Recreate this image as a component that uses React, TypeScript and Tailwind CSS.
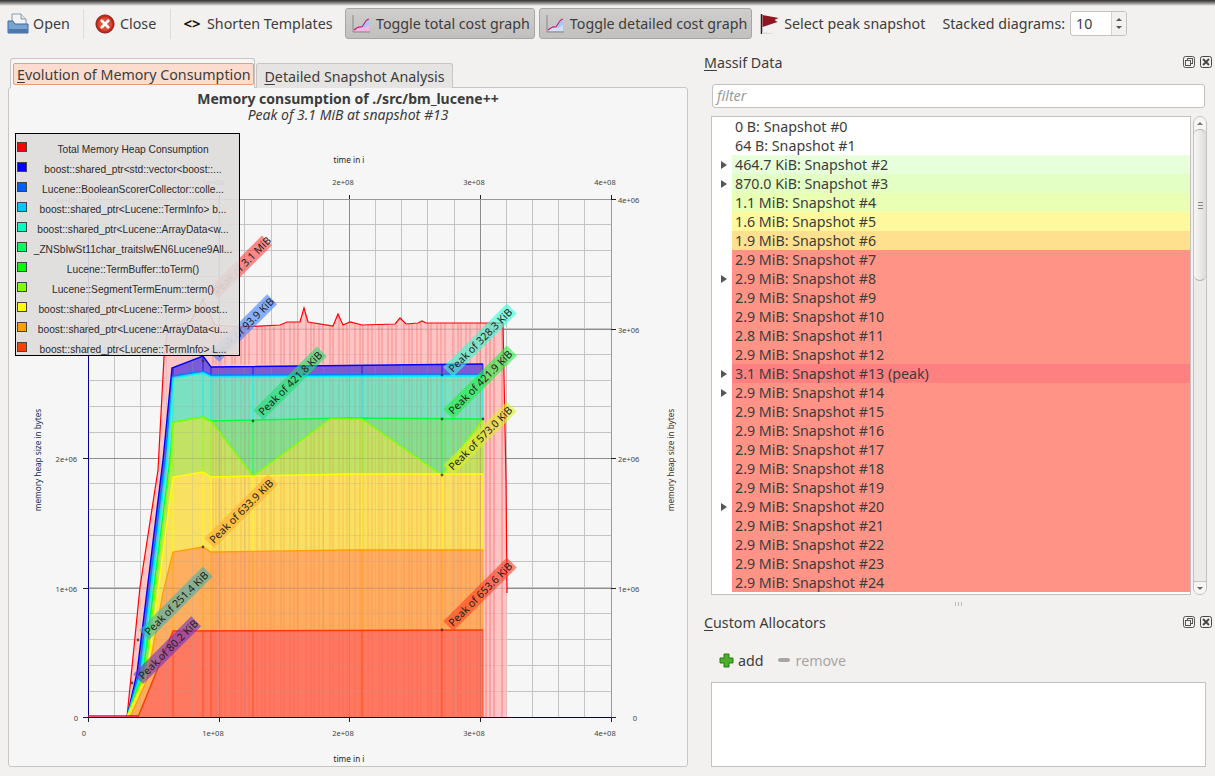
import type { ReactNode } from "react";

type Pt = [number, number];

const rows: { label: string; bg: string; arrow?: boolean }[] = [
  { label: "0 B: Snapshot #0", bg: "bg-white" },
  { label: "64 B: Snapshot #1", bg: "bg-white" },
  { label: "464.7 KiB: Snapshot #2", bg: "bg-[#e8ffdc]", arrow: true },
  { label: "870.0 KiB: Snapshot #3", bg: "bg-[#e4ffc4]", arrow: true },
  { label: "1.1 MiB: Snapshot #4", bg: "bg-[#e8ffb4]" },
  { label: "1.6 MiB: Snapshot #5", bg: "bg-[#fff89c]" },
  { label: "1.9 MiB: Snapshot #6", bg: "bg-[#ffe08e]" },
  { label: "2.9 MiB: Snapshot #7", bg: "bg-[#ff9486]" },
  { label: "2.9 MiB: Snapshot #8", bg: "bg-[#ff9486]", arrow: true },
  { label: "2.9 MiB: Snapshot #9", bg: "bg-[#ff9486]" },
  { label: "2.9 MiB: Snapshot #10", bg: "bg-[#ff9486]" },
  { label: "2.8 MiB: Snapshot #11", bg: "bg-[#ff9486]" },
  { label: "2.9 MiB: Snapshot #12", bg: "bg-[#ff9486]" },
  { label: "3.1 MiB: Snapshot #13 (peak)", bg: "bg-[#ff8080]", arrow: true },
  { label: "2.9 MiB: Snapshot #14", bg: "bg-[#ff9486]", arrow: true },
  { label: "2.9 MiB: Snapshot #15", bg: "bg-[#ff9486]" },
  { label: "2.9 MiB: Snapshot #16", bg: "bg-[#ff9486]" },
  { label: "2.9 MiB: Snapshot #17", bg: "bg-[#ff9486]" },
  { label: "2.9 MiB: Snapshot #18", bg: "bg-[#ff9486]" },
  { label: "2.9 MiB: Snapshot #19", bg: "bg-[#ff9486]" },
  { label: "2.9 MiB: Snapshot #20", bg: "bg-[#ff9486]", arrow: true },
  { label: "2.9 MiB: Snapshot #21", bg: "bg-[#ff9486]" },
  { label: "2.9 MiB: Snapshot #22", bg: "bg-[#ff9486]" },
  { label: "2.9 MiB: Snapshot #23", bg: "bg-[#ff9486]" },
  { label: "2.9 MiB: Snapshot #24", bg: "bg-[#ff9486]" },
];

const legend = [
  { label: "Total Memory Heap Consumption", color: "bg-[#ff0000]" },
  { label: "boost::shared_ptr<std::vector<boost::...", color: "bg-[#0000ff]" },
  { label: "Lucene::BooleanScorerCollector::colle...", color: "bg-[#0060ff]" },
  { label: "boost::shared_ptr<Lucene::TermInfo> b...", color: "bg-[#00c8ff]" },
  { label: "boost::shared_ptr<Lucene::ArrayData<w...", color: "bg-[#00ffc0]" },
  { label: "_ZNSbIwSt11char_traitsIwEN6Lucene9All...", color: "bg-[#00ff60]" },
  { label: "Lucene::TermBuffer::toTerm()", color: "bg-[#00ff00]" },
  { label: "Lucene::SegmentTermEnum::term()", color: "bg-[#80ff00]" },
  { label: "boost::shared_ptr<Lucene::Term> boost...", color: "bg-[#ffff00]" },
  { label: "boost::shared_ptr<Lucene::ArrayData<u...", color: "bg-[#ffa000]" },
  { label: "boost::shared_ptr<Lucene::TermInfo> L...", color: "bg-[#ff4000]" },
];

// chart geometry is written in page pixels, the svg viewBox lines up with them
const X0 = 88, X4 = 611, Y0 = 717, Y4 = 199;
const xMajor = [88, 219, 349, 480, 611];
const yMajor = [717, 588, 458, 329, 199];
const xMinor = Array.from({ length: 21 }, (_, i) => 88 + i * 26.15);
const yMinor = Array.from({ length: 21 }, (_, i) => 717 - i * 25.9);

const totalTop: Pt[] = [
  [127, 717], [140, 587], [158, 470], [164, 357], [168, 328], [190, 322], [203, 300], [215, 325], [240, 327],
  [280, 325], [287, 322], [300, 322], [304, 308], [308, 322], [333, 326], [338, 314], [343, 325], [350, 322],
  [362, 325], [395, 324], [400, 318], [406, 324], [418, 323], [422, 321], [426, 323], [503, 323], [506, 480],
  [507, 593],
];

const layers: { fill: string; line: string; top: Pt[] }[] = [
  { fill: "#7a5cd8", line: "#0000ff", top: [[127, 717], [137, 673], [163, 460], [172, 368], [203, 356], [211, 367], [483, 364]] },
  { fill: "#6f9fe0", line: "#0080ff", top: [[127, 717], [139, 673], [165, 460], [173, 376], [203, 371], [211, 375], [483, 374]] },
  { fill: "#7ae0c0", line: "#00f0ff", top: [[127, 717], [141, 673], [167, 460], [173, 378], [203, 373], [211, 377], [483, 376]] },
  { fill: "#82e08e", line: "#00ff40", top: [[127, 717], [143, 673], [170, 460], [173, 422], [203, 417], [211, 421], [350, 418], [483, 419]] },
  { fill: "#c2e264", line: "#80ff00", top: [[127, 717], [145, 673], [171, 460], [173, 422], [203, 417], [211, 421], [253, 476], [330, 419], [362, 419], [442, 475], [483, 419]] },
  { fill: "#fae060", line: "#ffff00", top: [[127, 717], [147, 673], [173, 477], [203, 472], [211, 477], [350, 474], [483, 474]] },
  { fill: "#ffae60", line: "#ffa000", top: [[130, 717], [147, 680], [163, 593], [173, 552], [203, 547], [211, 552], [350, 550], [483, 550]] },
  { fill: "#ff7860", line: "#ff3c00", top: [[138, 717], [173, 631], [483, 630]] },
];

const snapshotXs = [173, 203, 211, 253, 362, 442, 483];

const stripeSteps = [3, 5, 4, 7, 3, 6, 4, 4, 8, 5];
const stripes: number[] = [];
for (let x = 213, i = 0; x < 507; x += stripeSteps[i % 10], i++) stripes.push(x);

const peaks: { text: string; x: number; y: number; bg: string; w: number }[] = [
  { text: "Peak of 3.1 MiB", x: 216, y: 297, bg: "#ff4040", w: 76 },
  { text: "Peak of 93.9 KiB", x: 217, y: 360, bg: "#4080ff", w: 82 },
  { text: "Peak of 421.8 KiB", x: 261, y: 418, bg: "#20e070", w: 90 },
  { text: "Peak of 328.3 KiB", x: 451, y: 375, bg: "#30ffd8", w: 90 },
  { text: "Peak of 421.9 KiB", x: 451, y: 417, bg: "#20f040", w: 90 },
  { text: "Peak of 573.0 KiB", x: 451, y: 473, bg: "#e0f020", w: 90 },
  { text: "Peak of 633.9 KiB", x: 212, y: 546, bg: "#ffb030", w: 90 },
  { text: "Peak of 251.4 KiB", x: 147, y: 638, bg: "#40b0b0", w: 90 },
  { text: "Peak of 80.2 KiB", x: 141, y: 682, bg: "#7030c0", w: 82 },
  { text: "Peak of 653.6 KiB", x: 451, y: 629, bg: "#ff4020", w: 90 },
];

const dots: Pt[] = [[132, 683], [138, 640], [203, 547], [203, 361], [203, 300], [253, 421], [442, 375], [442, 419], [483, 419], [442, 475], [442, 630]];

function yAt(pts: Pt[], x: number) {
  for (let i = 1; i < pts.length; i++) {
    if (x <= pts[i][0]) {
      const [x1, y1] = pts[i - 1];
      const [x2, y2] = pts[i];
      return y1 + ((y2 - y1) * (x - x1)) / (x2 - x1);
    }
  }
  return pts[pts.length - 1][1];
}

const str = (pts: Pt[]) => pts.map((p) => p.join(",")).join(" ");

function Grid({ minor, major }: { minor: string; major: string }) {
  return (
    <g strokeWidth="1" shapeRendering="crispEdges">
      {xMinor.map((x) => <line key={x} x1={x} x2={x} y1={Y4} y2={Y0} stroke={minor} />)}
      {yMinor.map((y) => <line key={y} y1={y} y2={y} x1={X0} x2={X4} stroke={minor} />)}
      {xMajor.map((x) => <line key={x} x1={x} x2={x} y1={Y4} y2={Y0} stroke={major} />)}
      {yMajor.map((y) => <line key={y} y1={y} y2={y} x1={X0} x2={X4} stroke={major} />)}
    </g>
  );
}

function MemoryChart() {
  const tick = "font-['Noto_Sans',sans-serif] text-[7.5px] fill-[#444]";
  const axis = "font-['Noto_Sans',sans-serif] text-[8.2px]";
  return (
    <svg width="678" height="645" viewBox="9 122 678 645" className="block">
      <defs>
        <clipPath id="total">
          <polygon points={str([...totalTop, [507, 717]])} />
        </clipPath>
      </defs>

      <Grid minor="#cfcfcf" major="#9a9a9a" />

      {/* stacked areas, top one first */}
      <polygon points={str([...totalTop, [507, 717]])} fill="#ffc4c4" />
      {layers.map((l) => (
        <polygon key={l.line} points={str([...l.top, [l.top[l.top.length - 1][0], 717]])} fill={l.fill} />
      ))}
      <g opacity="0.22"><Grid minor="#a0a0a0" major="#606060" /></g>
      <g clipPath="url(#total)" shapeRendering="crispEdges" stroke="#ff3030" strokeWidth="1.5">
        {stripes.map((x) => (
          <g key={x}>
            <line x1={x} x2={x} y1={300} y2={x > 483 ? 717 : 364} strokeOpacity={x > 483 ? 0.25 : 0.2} />
            {x <= 483 && <line x1={x} x2={x} y1={364} y2={717} strokeOpacity="0.09" />}
          </g>
        ))}
      </g>

      {/* snapshot markers inside each layer */}
      {layers.map((l, i) => {
        const below = layers[i + 1]?.top;
        return snapshotXs.map((x) => (
          <line key={l.line + x} x1={x} x2={x} y1={yAt(l.top, x)} y2={below ? yAt(below, x) : 717} stroke={l.line} strokeOpacity="0.75" />
        ));
      })}

      <polyline points={str(totalTop)} fill="none" stroke="#ff0000" strokeWidth="1.2" />
      {layers.map((l) => <polyline key={l.line} points={str(l.top)} fill="none" stroke={l.line} strokeWidth="1.4" />)}

      {/* axes */}
      <g shapeRendering="crispEdges">
        <line x1={X0} x2={X0} y1={Y4} y2={Y0} stroke="#000090" />
        <line x1={X0} x2={X4} y1={Y0} y2={Y0} stroke="#000060" />
        <line x1={X0} x2={X4} y1={Y4} y2={Y4} stroke="#999" />
        <line x1={X4} x2={X4} y1={Y4} y2={Y0} stroke="#999" />
        {xMajor.map((x) => (
          <g key={x} stroke="#222">
            <line x1={x} x2={x} y1={195} y2={199} />
            <line x1={x} x2={x} y1={717} y2={722} />
          </g>
        ))}
        {yMajor.map((y) => (
          <g key={y} stroke="#222">
            <line x1={83} x2={88} y1={y} y2={y} />
            <line x1={611} x2={616} y1={y} y2={y} />
          </g>
        ))}
      </g>
      <line x1="88" x2="138" y1="716" y2="716" stroke="#ff0040" strokeWidth="1.4" />

      {["0", "1e+08", "2e+08", "3e+08", "4e+08"].map((t, i) => (
        <g key={t} className={tick} textAnchor="middle">
          <text x={i === 0 ? 84 : xMajor[i] - 6} y={185}>{t}</text>
          <text x={i === 0 ? 84 : xMajor[i] - 6} y={736}>{t}</text>
        </g>
      ))}
      {["0", "1e+06", "2e+06", "3e+06", "4e+06"].map((t, i) => (
        <g key={t} className={tick}>
          <text x={i === 0 ? 78 : 77} y={yMajor[i] + 4} textAnchor="end">{t}</text>
          <text x={i === 0 ? 635 : 618} y={yMajor[i] + 4} textAnchor={i === 0 ? "middle" : "start"}>{t}</text>
        </g>
      ))}
      <text x="349" y="163" textAnchor="middle" className={axis} fill="#222">time in i</text>
      <text x="349" y="762" textAnchor="middle" className={axis} fill="#222">time in i</text>
      <text transform="translate(41 460) rotate(-90)" textAnchor="middle" className={axis} fill="#103060">memory heap size in bytes</text>
      <text transform="translate(674 460) rotate(-90)" textAnchor="middle" className={axis} fill="#503020">memory heap size in bytes</text>

      {/* peak labels */}
      {peaks.map((p) => (
        <g key={p.text} transform={`translate(${p.x} ${p.y}) rotate(-45)`}>
          <rect x="0" y="-11" width={p.w} height="14" fill={p.bg} fillOpacity="0.6" />
          <text x="3" y="0" className="font-['Noto_Sans',sans-serif] text-[10.5px]" fill="#222">{p.text}</text>
        </g>
      ))}
      {dots.map(([x, y]) => <circle key={`${x}-${y}`} cx={x} cy={y} r="1.4" fill="#333" fillOpacity="0.8" stroke="none" />)}
    </svg>
  );
}

function OpenIcon() {
  return (
    <svg width="22" height="24" viewBox="0 0 22 24">
      <path d="M5 2h9l5 5v7H5z" fill="#f4f4f4" stroke="#8a9aaa" />
      <path d="M14 2v5h5" fill="#dfe6ee" stroke="#8a9aaa" />
      <path d="M1 9h5l2 3h13v9H1z" fill="#7aa3d0" stroke="#3f6a9c" />
      <path d="M1.5 17h19v4h-19z" fill="#4a78ad" />
    </svg>
  );
}

function CloseIcon() {
  return (
    <svg width="20" height="20" viewBox="0 0 22 22">
      <circle cx="11" cy="11" r="10" fill="#c8281c" stroke="#7c1a10" />
      <circle cx="11" cy="11" r="7.5" fill="#d9503a" />
      <path d="M7.5 7.5l7 7M14.5 7.5l-7 7" stroke="#fff" strokeWidth="3" strokeLinecap="round" />
    </svg>
  );
}

function GraphIcon({ detailed }: { detailed?: boolean }) {
  return (
    <svg width="20" height="20" viewBox="0 0 20 20">
      <path d="M2 1v17h17" fill="none" stroke="#888" />
      <path d="M3 17l3-5 4 2 3-6 5-2v11z" fill={detailed ? "#cfe0ff" : "#f4b4e4"} />
      <path d="M10 14l3-6 5-3v6l-5 3z" fill="#a8c8f4" />
      <path d="M3 16c3-2 4-4 7-3 3 0 3-7 8-8" fill="none" stroke="#d0206c" strokeWidth="1.2" />
    </svg>
  );
}

function FlagIcon() {
  return (
    <svg width="20" height="24" viewBox="0 0 20 24">
      <path d="M1.5 2v20" stroke="#222" strokeWidth="1.5" />
      <path d="M2.5 3l16 3-4 2 3 2-15 5z" fill="#8e1420" />
      <path d="M2 20l14 2H2z" fill="#ddd" />
    </svg>
  );
}

function DockButtons() {
  return (
    <div className="flex items-center gap-[5px]">
      <svg width="12" height="12" viewBox="0 0 12 12" fill="none" stroke="#555">
        <rect x="0.5" y="0.5" width="11" height="11" rx="2" />
        <rect x="4.5" y="2.5" width="5" height="5" />
        <rect x="2.5" y="4.5" width="5" height="5" fill="#f2f1f0" />
      </svg>
      <svg width="12" height="12" viewBox="0 0 12 12" fill="none" stroke="#444">
        <rect x="0.5" y="0.5" width="11" height="11" rx="2" />
        <path d="M3 3l6 6M9 3l-6 6" strokeWidth="1.8" />
      </svg>
    </div>
  );
}

function ToolSep() {
  return <div className="w-px h-[30px] bg-[#dedcda]" />;
}

function ToggleButton({ children }: { children: ReactNode }) {
  return (
    <div className="h-[31px] flex items-center gap-[5px] pl-[5px] pr-[4px] rounded-[3px] border border-[#a8a6a4] bg-gradient-to-b from-[#d0cecc] to-[#c2c0be]">
      {children}
    </div>
  );
}

function DockTitle({ first, rest }: { first: string; rest: string }) {
  return (
    <div className="h-[20px] flex items-center justify-between">
      <span className="text-[#3c3c3c]">
        <span className="underline underline-offset-2">{first}</span>
        {rest}
      </span>
      <DockButtons />
    </div>
  );
}

export default function App() {
  return (
    <div className="w-[1215px] h-[776px] overflow-hidden bg-[#f2f1f0] flex flex-col font-['Noto_Sans',sans-serif] text-[14.25px] leading-[19px] text-[#3c3c3c]">
      <div className="h-[6px] shrink-0 bg-gradient-to-b from-[#2e2e2e] to-[#f2f1f0]" />

      {/* toolbar */}
      <div className="h-[35px] shrink-0 flex items-center pl-[7px]">
        <div className="flex items-center gap-[4px] w-[76px]"><OpenIcon /><span>Open</span></div>
        <ToolSep />
        <div className="flex items-center gap-[5px] w-[86px] pl-[11px]"><CloseIcon /><span>Close</span></div>
        <ToolSep />
        <div className="flex items-center gap-[5px] w-[174px] pl-[11px]">
          <span className="w-[20px] text-center font-bold text-[15px] text-[#111]">&lt;&gt;</span>
          <span>Shorten Templates</span>
        </div>
        <div className="flex items-center gap-[4px]">
          <ToggleButton><GraphIcon /><span>Toggle total cost graph</span></ToggleButton>
          <ToggleButton><GraphIcon detailed /><span>Toggle detailed cost graph</span></ToggleButton>
        </div>
        <div className="flex items-center gap-[4px] ml-[8px]"><FlagIcon /><span>Select peak snapshot</span></div>
        <span className="ml-[17px]">Stacked diagrams:</span>
        <div className="ml-[5px] w-[57px] h-[25px] flex bg-white border border-[#c4c2c0] rounded-[3px]">
          <span className="flex-1 pl-[5px] leading-[23px]">10</span>
          <div className="w-[15px] flex flex-col items-center justify-center gap-[5px] border-l border-[#d4d2d0] bg-[#f2f1f0] rounded-r-[3px]">
            <span className="w-0 h-0 border-x-[3px] border-x-transparent border-b-[3px] border-b-[#555]" />
            <span className="w-0 h-0 border-x-[3px] border-x-transparent border-t-[3px] border-t-[#555]" />
          </div>
        </div>
      </div>

      <div className="flex-1 flex min-h-0">
        {/* left tabs */}
        <div className="w-[696px] shrink-0 pl-[8px] pr-[8px] pt-[17px] flex flex-col">
          <div className="flex items-end h-[30px] pl-[2px] relative z-10 -mb-px">
            <div className="h-[30px] w-[245px] pt-[4px] pl-[2px] bg-[#f6f6f6] border border-b-0 border-[#c8c6c4] rounded-t-[3px]">
              <div className="h-[22px] px-[3px] flex items-center whitespace-nowrap bg-[#fbdccf] border border-[#f09a7a] rounded-[2px]">
                <span><span className="underline underline-offset-2">E</span>volution of Memory Consumption</span>
              </div>
            </div>
            <div className="ml-[1px] h-[25px] w-[197px] flex items-center justify-center bg-[#e6e4e2] border border-b-0 border-[#c8c6c4] rounded-t-[3px]">
              <span><span className="underline underline-offset-2">D</span>etailed Snapshot Analysis</span>
            </div>
          </div>
          <div className="relative w-[680px] h-[680px] bg-[#f6f6f6] border border-[#c8c6c4] rounded-[3px]">
            <div className="h-[34px] pt-[2px] text-center">
              <div className="font-bold text-[14px] leading-[17px]">Memory consumption of ./src/bm_lucene++</div>
              <div className="italic text-[14px] leading-[15px]">Peak of 3.1 MiB at snapshot #13</div>
            </div>
            <MemoryChart />

            {/* legend floats over the chart */}
            <div className="absolute left-[6px] top-[45px] w-[225px] h-[223px] border border-black bg-[#dfdddb]/90 font-['Liberation_Sans',sans-serif] text-[10.2px] leading-[20px] text-[#2a2a2a] pt-[6px]">
              {legend.map((l) => (
                <div key={l.label} className="h-[20px] flex">
                  <span className={`w-[10px] h-[10px] mt-[2px] ml-[1px] shrink-0 border border-[#444] ${l.color}`} />
                  <span className="flex-1 text-center whitespace-nowrap overflow-hidden">{l.label}</span>
                </div>
              ))}
            </div>
          </div>
        </div>

        {/* right docks */}
        <div className="flex-1 pr-[3px] pl-[8px] pt-[11px] flex flex-col">
          <DockTitle first="M" rest="assif Data" />
          <div className="ml-[8px] mt-[12px] h-[24px] w-[493px] bg-white border border-[#c4c2c0] rounded-[3px] pl-[4px] italic text-[#9a9a9a] leading-[22px]">filter</div>
          <div className="ml-[7px] mt-[8px] flex gap-[2px] h-[479px]">
            <div className="w-[480px] border border-[#c4c2c0] bg-white overflow-hidden">
              {rows.map((r) => (
                <div key={r.label} className="h-[19px] flex">
                  <div className="w-[20px] shrink-0 bg-white flex items-center pl-[9px]">
                    {r.arrow && <span className="w-0 h-0 border-y-[4px] border-y-transparent border-l-[6px] border-l-[#555]" />}
                  </div>
                  <div className={`flex-1 pl-[3px] whitespace-nowrap ${r.bg}`}>{r.label}</div>
                </div>
              ))}
            </div>
            <div className="w-[14px] flex flex-col border border-[#c4c2c0] rounded-[7px] bg-[#ecebe9] overflow-hidden">
              <div className="h-[12px] flex items-center justify-center bg-[#f6f5f4]">
                <span className="w-0 h-0 border-x-[3px] border-x-transparent border-b-[3px] border-b-[#777]" />
              </div>
              <div className="h-[152px] flex flex-col items-center justify-center gap-[2px] bg-gradient-to-r from-[#f8f7f6] to-[#dedcda] border-y border-[#b0aeac] rounded-[6px]">
                <span className="w-[5px] h-px bg-[#888]" />
                <span className="w-[5px] h-px bg-[#888]" />
                <span className="w-[5px] h-px bg-[#888]" />
              </div>
              <div className="flex-1" />
              <div className="h-[13px] flex items-center justify-center bg-[#f6f5f4] border-t border-[#c4c2c0]">
                <span className="w-0 h-0 border-x-[3px] border-x-transparent border-t-[3px] border-t-[#666]" />
              </div>
            </div>
          </div>

          <div className="h-[17px] flex items-center justify-center gap-[1px]">
            <span className="w-px h-[4px] bg-[#bbb]" />
            <span className="w-px h-[4px] bg-[#bbb] ml-[1px]" />
            <span className="w-px h-[4px] bg-[#bbb] ml-[1px]" />
          </div>
          <DockTitle first="C" rest="ustom Allocators" />
          <div className="mt-[18px] ml-[15px] h-[20px] flex items-center">
            <svg width="15" height="15" viewBox="0 0 15 15">
              <path d="M5 1h5v4h4v5h-4v4H5v-4H1V5h4z" fill="#4cae2a" stroke="#2a7a14" />
            </svg>
            <span className="ml-[4px]">add</span>
            <span className="ml-[14px] w-[12px] h-[4px] rounded-[2px] bg-[#a8a6a4]" />
            <span className="ml-[6px] text-[#a8a6a4]">remove</span>
          </div>
          <div className="ml-[7px] mt-[12px] h-[85px] w-[495px] bg-white border border-[#c4c2c0]" />
        </div>
      </div>
    </div>
  );
}
